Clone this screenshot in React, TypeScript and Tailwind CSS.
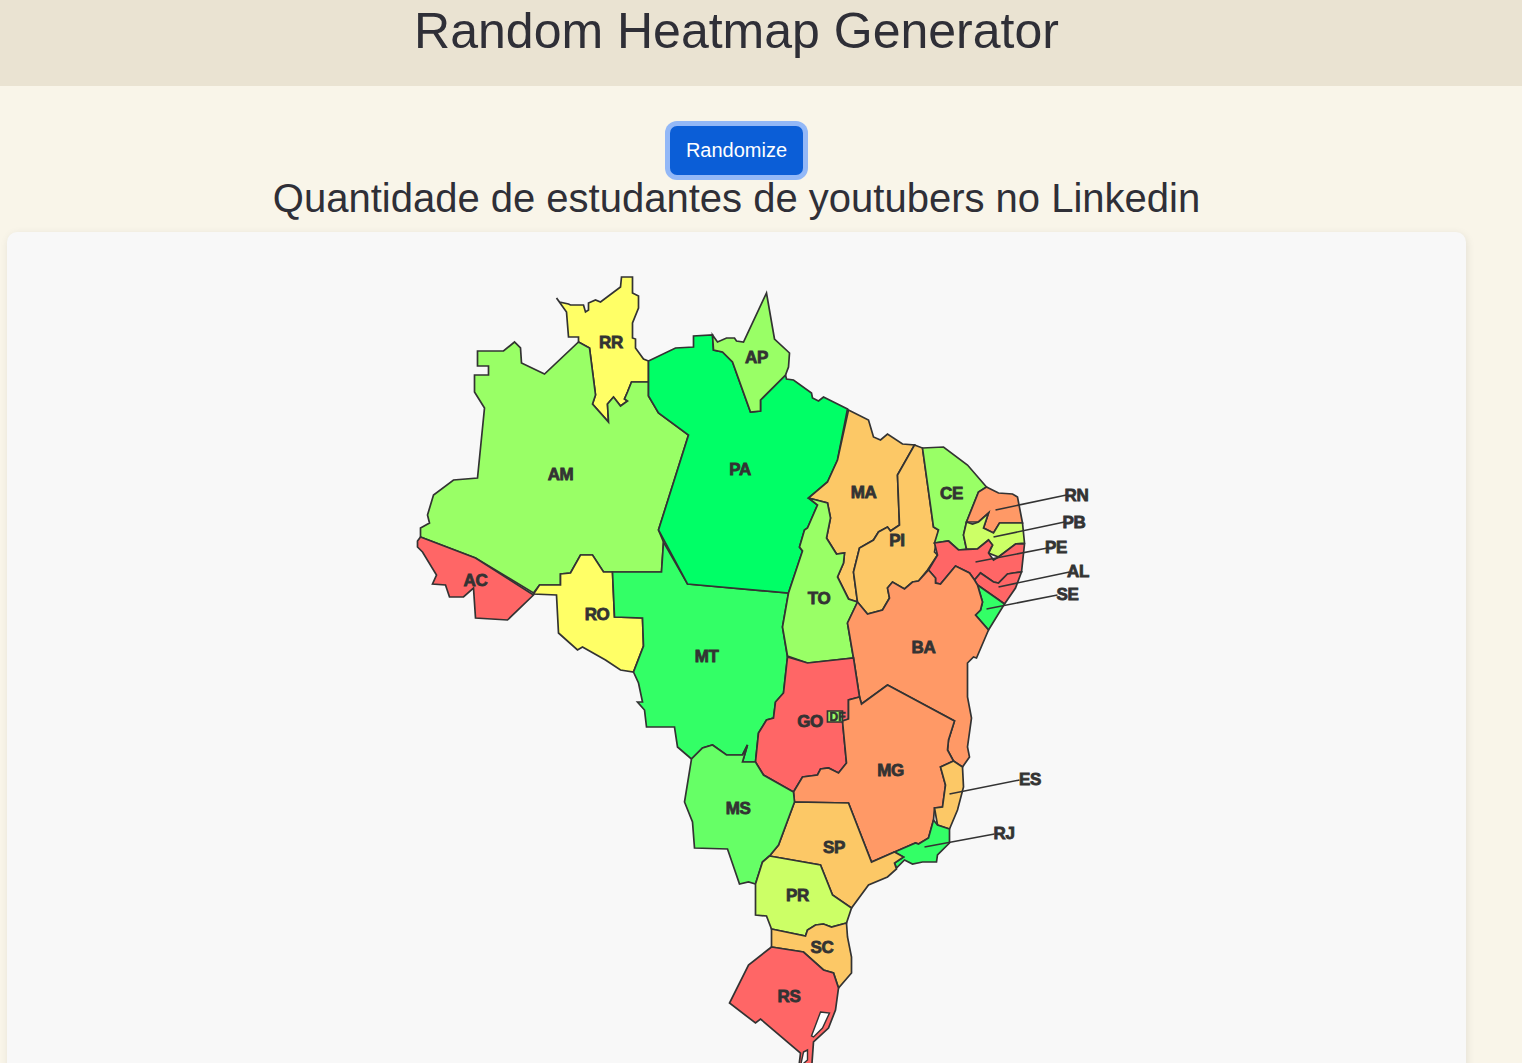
const regions = [
  { id: 'RR', fill: 'fill-[#ffff66]', points: '556,298 559,302 568,304 570,305 583,305 585,312 588,310 588,303 595,300 600,302 620,287 621,277 632,277 632,293 638,296 638,308 632,323 632,338 635,339 635,348 643,359 648,361 648,382 631,382 627,392 624,399 627,401 620,406 613,397 607,404 608,422 592,404 595,395 589,348 578,342 578,337 568,337 566,312' },
  { id: 'AM', fill: 'fill-[#99ff66]', points: '420,537 420,528 429,523 427,515 433,495 453,480 477,478 484,408 474,392 474,375 488,375 488,366 477,366 477,351 503,351 514,342 520,348 521,363 544,374 578,342 589,348 595,395 592,404 608,422 607,404 613,397 620,406 627,401 624,399 627,392 631,382 648,382 648,396 658,413 688,435 658,530 663,542 661,572 603,572 592,555 580,555 570,573 560,574 560,585 539,585 533,593 475,558' },
  { id: 'AC', fill: 'fill-[#ff6666]', points: '420,537 475,558 533,595 507,620 475,618 473,588 463,597 449,597 445,585 432,584 436,575 422,552 417,547 417,541' },
  { id: 'RO', fill: 'fill-[#ffff66]', points: '533,594 539,585 560,585 560,574 570,573 580,555 592,555 603,572 612,572 614,617 642,618 643,646 633,672 620,670 605,660 582,647 577,650 558,633 556,595' },
  { id: 'MT', fill: 'fill-[#33ff66]', points: '612,572 661,572 663,542 687,584 788,593 782,627 787,657 783,693 775,702 773,718 766,720 758,733 755,762 742,762 747,745 742,755 726,755 712,745 702,748 691,759 677,747 674,727 646,727 644,710 637,702 642,702 638,683 633,672 643,646 642,618 614,617' },
  { id: 'PA', fill: 'fill-[#00ff66]', points: '648,361 675,348 693,347 693,336 712,335 713,350 722,352 732,362 750,412 760,411 760,400 785,375 786,379 793,380 811,393 812,398 818,401 823,397 847,409 837,460 827,482 808,498 817,505 807,528 804,530 799,547 802,551 788,593 687,584 658,530 688,435 658,413 648,396' },
  { id: 'AP', fill: 'fill-[#99ff66]', points: '712,335 717,342 726,338 734,338 736,341 743,342 766,293 774,339 789,353 788,367 785,375 760,400 760,411 750,412 732,362 722,352 713,350' },
  { id: 'MA', fill: 'fill-[#fcc866]', points: '848,410 868,420 873,437 880,440 887,434 902,444 914,445 897,475 899,525 890,531 887,527 878,532 873,540 859,548 853,572 857,602 848,599 837,577 843,563 844,553 836,554 826,538 830,518 827,503 808,498 827,482 837,460' },
  { id: 'TO', fill: 'fill-[#99ff66]', points: '808,498 827,503 830,518 826,538 836,554 844,553 843,563 837,577 848,599 857,602 847,623 853,658 807,663 787,656 782,627 788,593 802,551 799,547 804,530 807,528 817,505' },
  { id: 'PI', fill: 'fill-[#fcc866]', points: '914,445 922,448 933,527 938,530 934,552 937,555 927,570 918,581 912,582 904,589 892,582 887,588 889,598 882,610 867,614 857,602 853,572 859,548 873,540 878,532 887,527 890,531 899,525 897,475' },
  { id: 'CE', fill: 'fill-[#99ff66]', points: '922,448 943,447 967,465 986,487 978,492 968,517 966,522 963,535 966,549 958,550 948,541 934,543 938,530 933,527' },
  { id: 'RN', fill: 'fill-[#ff9966]', points: '986,487 998,493 1012,494 1017,497 1022,523 999,523 993,533 983,528 988,513 978,522 966,522 968,517 978,492' },
  { id: 'PB', fill: 'fill-[#ccff66]', points: '966,522 972,524 978,522 988,513 983,528 993,533 999,523 1022,523 1024,543 1015,544 998,557 988,553 992,545 988,540 977,549 966,549 963,535' },
  { id: 'PE', fill: 'fill-[#ff6666]', points: '934,543 948,541 958,550 977,549 988,540 992,545 988,553 993,560 998,557 1015,544 1024,544 1021,572 1013,573 1007,574 998,583 993,582 980,573 974,580 969,573 955,566 940,584 935,583 935,578 928,570 937,555' },
  { id: 'AL', fill: 'fill-[#ff6666]', points: '980,573 993,582 998,583 1007,574 1013,573 1021,572 1015,588 1004,604 997,599 977,585 974,580' },
  { id: 'SE', fill: 'fill-[#33ff66]', points: '977,585 997,599 1004,604 988,630 975,615 980,610 982,602' },
  { id: 'BA', fill: 'fill-[#ff9966]', points: '847,623 857,602 867,614 882,610 889,598 887,588 892,582 904,589 912,582 918,581 928,570 935,578 935,583 940,584 955,566 969,573 974,580 977,585 982,602 980,610 975,615 988,630 976,658 973,657 967,663 967,697 971,718 967,747 969,757 962,767 953,761 947,750 948,740 954,721 887,685 861,704 859,697 853,658' },
  { id: 'GO', fill: 'fill-[#ff6666]', points: '787,657 807,663 853,658 859,697 848,700 848,719 842,721 846,763 838,773 828,768 820,769 817,775 802,777 793,792 763,775 755,762 758,733 766,720 773,718 775,702 783,693' },
  { id: 'MG', fill: 'fill-[#ff9966]', points: '861,704 887,685 954,721 948,740 947,750 953,761 940,767 945,785 942,807 934,808 933,820 928,838 918,844 915,843 894,852 871,862 848,803 794,802 793,792 802,777 817,775 820,769 828,768 838,773 846,763 842,721 848,719 848,700 859,697' },
  { id: 'ES', fill: 'fill-[#fcc866]', points: '940,767 953,761 962,767 963,787 957,810 949,829 937,825 934,808 942,807 945,785' },
  { id: 'RJ', fill: 'fill-[#33ff66]', points: '933,820 937,825 949,829 949,843 937,855 936,862 922,862 912,864 904,860 896,868 894,863 903,857 894,852 915,843 918,844 928,838' },
  { id: 'SP', fill: 'fill-[#fcc866]', points: '794,802 848,803 871,862 894,852 903,857 894,863 896,869 887,877 868,885 851,908 832,895 820,865 769,856 778,845' },
  { id: 'MS', fill: 'fill-[#66ff66]', points: '793,792 794,802 778,845 769,856 762,862 755,884 748,882 739,884 727,849 694,848 692,822 684,802 691,759 702,748 712,745 726,755 742,755 747,745 742,762 755,762 763,775' },
  { id: 'PR', fill: 'fill-[#ccff66]', points: '769,856 820,865 832,895 851,908 846,923 831,927 823,924 815,925 807,930 805,936 771,929 766,916 755,915 755,884 762,862' },
  { id: 'SC', fill: 'fill-[#fcc866]', points: '771,929 805,936 807,930 815,925 823,924 831,927 846,923 847,937 851,957 851,973 838,988 833,973 823,970 803,952 771,947' },
  { id: 'RS', fill: 'fill-[#ff6666]', points: '771,947 803,952 823,970 833,973 838,988 835,1010 828,1028 813,1042 811,1070 798,1070 800,1053 760,1019 755,1023 729,1003 748,965' },
  { id: 'DF', fill: 'fill-[#99ff66]', points: '827,711 842,711 842,722 827,722' },
];

const lagoons = [
  '820,1012 829,1013 822,1028 813,1037 811,1036',
  '803,1052 807,1050 807,1060 800,1066',
];

const leaders = [
  { x1: 995, y1: 510, x2: 1066, y2: 495 },
  { x1: 993, y1: 537, x2: 1064, y2: 522 },
  { x1: 975, y1: 562, x2: 1047, y2: 548 },
  { x1: 998, y1: 587, x2: 1069, y2: 572 },
  { x1: 986, y1: 609, x2: 1057, y2: 595 },
  { x1: 949, y1: 794, x2: 1019, y2: 780 },
  { x1: 924, y1: 847, x2: 994, y2: 834 },
];

const labels = [
  ['RR', 610.5, 342], ['AP', 756, 357], ['AM', 560, 474], ['PA', 739.5, 469], ['AC', 475, 580],
  ['RO', 596.5, 614], ['MT', 706, 656], ['TO', 818.5, 598], ['MA', 863, 492], ['PI', 896.5, 540],
  ['CE', 951, 493], ['RN', 1076, 495], ['PB', 1073.5, 522], ['PE', 1055.5, 547], ['AL', 1077.5, 571],
  ['SE', 1067, 594], ['BA', 923, 647], ['GO', 809.5, 721], ['MG', 890, 770],
  ['ES', 1029.5, 779], ['RJ', 1003.5, 833], ['MS', 737.5, 808], ['SP', 833.5, 847], ['PR', 797, 895],
  ['SC', 821.5, 947], ['RS', 788.5, 996],
] as const;

function BrazilMap() {
  return (
    <svg viewBox="376.5 262 720 810" className="mx-auto block h-[810px] w-[720px] shrink-0">
      {regions.map((region) => (
        <polygon
          key={region.id}
          points={region.points}
          className={`${region.fill} stroke-[#333333] stroke-[1.7]`}
        />
      ))}
      {lagoons.map((points) => (
        <polygon key={points} points={points} className="fill-white stroke-[#333333] stroke-[1.4]" />
      ))}
      {leaders.map((line) => (
        <line key={line.x1} {...line} className="stroke-[#333333] stroke-[1.6]" />
      ))}
      {labels.map(([name, x, y]) => (
        <text
          key={name}
          x={x}
          y={y}
          textAnchor="middle"
          dominantBaseline="central"
          className="fill-[#333333] stroke-[#333333] stroke-[0.8] font-['Liberation_Sans',sans-serif] text-[17px] font-bold tracking-[-0.4px]"
        >
          {name}
        </text>
      ))}
      {/* DF barely fits its box, the label sits on top of it */}
      <text
        x={837}
        y={716.5}
        textAnchor="middle"
        dominantBaseline="central"
        className="fill-[#333333] stroke-[#333333] stroke-[0.6] font-['Liberation_Sans',sans-serif] text-[12px] font-bold"
      >
        DF
      </text>
    </svg>
  );
}

export default function App() {
  return (
    <div className="h-[1063px] overflow-hidden bg-[#f9f5e9] font-['Liberation_Sans',Arial,sans-serif] text-[#2f2f37]">
      <header className="h-[86px] bg-[#eae3d2]">
        <h1 className="w-[1473px] text-center text-[50px] leading-[62px]">Random Heatmap Generator</h1>
      </header>
      <main className="flex w-[1473px] flex-col items-center">
        <button className="mt-[40px] h-[49px] w-[133px] rounded-[7px] bg-[#0b5ed7] pb-[2px] text-[20px] text-white ring-[5px] ring-[#93b8f7]">
          Randomize
        </button>
        <h2 className="-mt-[1px] text-center text-[40px] leading-[48px]">
          Quantidade de estudantes de youtubers no Linkedin
        </h2>
        <section className="mt-[10px] ml-[7px] h-[900px] w-[1459px] self-start rounded-[10px] bg-[#f8f8f8] pt-[30px] shadow-[1px_2px_8px_rgba(0,0,0,0.09)]">
          <BrazilMap />
        </section>
      </main>
    </div>
  );
}
